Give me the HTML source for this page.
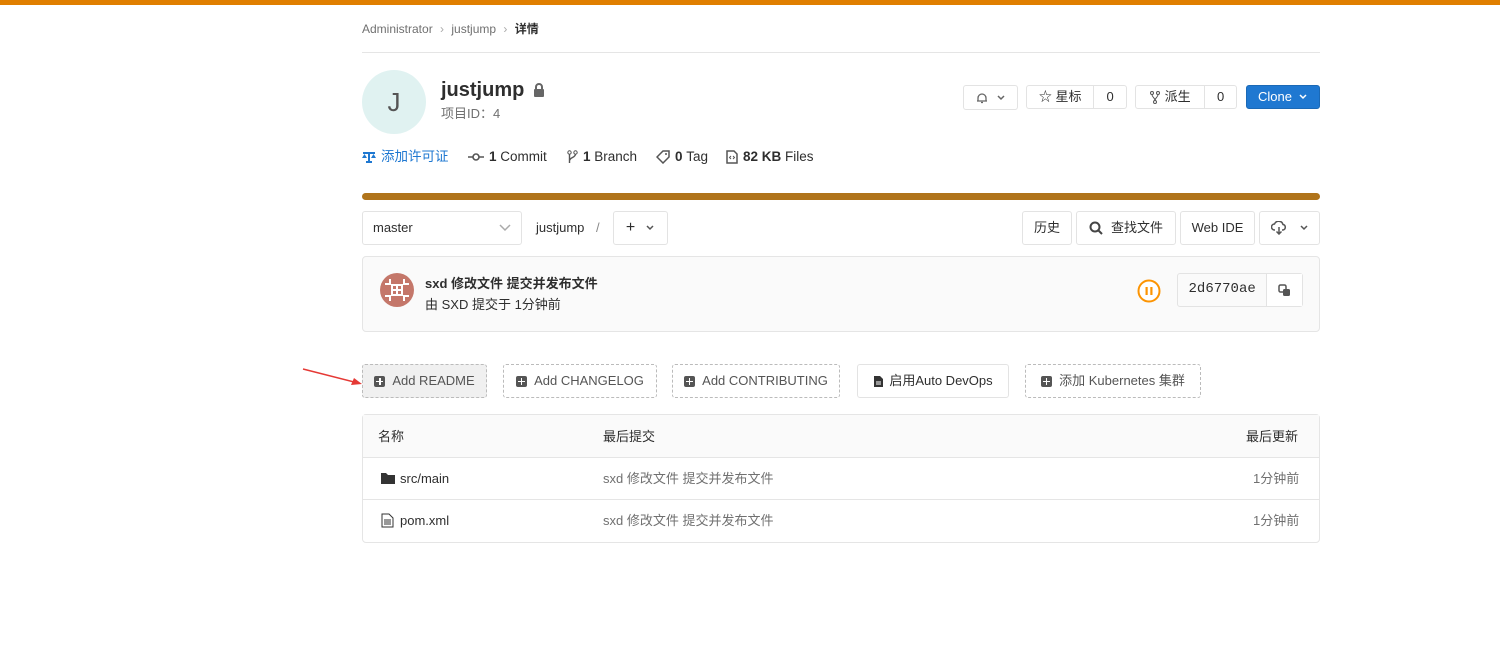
<!DOCTYPE html>
<html><head><meta charset="utf-8"><style>
*{box-sizing:border-box;margin:0;padding:0}
body{width:1500px;height:650px;background:#fff;font-family:"Liberation Sans","Noto Sans CJK SC",sans-serif;color:#2e2e2e;position:relative;overflow:hidden;font-size:13px;line-height:1.25}
.a{position:absolute}
.btn{position:absolute;border:1px solid #e3e3e3;border-radius:3px;background:#fff;display:flex;align-items:center;justify-content:center;font-size:13px;color:#2e2e2e}
.dash{position:absolute;border:1px dashed #bbb;border-radius:3px;display:flex;align-items:center;justify-content:center;font-size:13px;color:#555}
.pl{display:inline-block;width:11px;height:11px;background:#555;border-radius:2px;margin-right:7px;position:relative}
.pl:before{content:"";position:absolute;left:2px;top:5px;width:7px;height:1.5px;background:#fff}
.pl:after{content:"";position:absolute;left:4.8px;top:2px;width:1.5px;height:7px;background:#fff}
.row{position:absolute;left:362px;width:958px;border-top:1px solid #e5e5e5}
.st{position:absolute;top:149px;font-size:13.5px;white-space:nowrap;display:flex;align-items:center;height:16px}
.st svg{margin-right:5px}
</style></head><body>
<div class="a" style="left:0;top:0;width:1500px;height:5px;background:#e07f00"></div>
<div class="a" style="left:362px;top:22px;font-size:12px;color:#707070">Administrator <span style="color:#aaa;margin:0 4px">›</span> justjump <span style="color:#aaa;margin:0 4px">›</span> <b style="color:#2e2e2e;font-weight:bold">详情</b></div>
<div class="a" style="left:362px;top:52px;width:958px;height:1px;background:#e5e5e5"></div>
<div class="a" style="left:362px;top:70px;width:64px;height:64px;border-radius:50%;background:#e0f2f1;text-align:center;line-height:64px;font-size:26px;color:#555">J</div>
<div class="a" style="left:441px;top:78px;font-size:20px;font-weight:bold">justjump</div>
<svg class="a" style="left:533px;top:83px" width="12" height="14" viewBox="0 0 12 14"><rect x="1" y="6" width="10" height="8" rx="1" fill="#666"/><path d="M3 6V4a3 3 0 0 1 6 0v2" stroke="#666" stroke-width="2" fill="none"/></svg>
<div class="a" style="left:441px;top:106px;font-size:13px;color:#707070">项目ID：4</div>
<div class="st" style="left:362px;color:#1f78d1"><svg width="14" height="12" viewBox="0 0 14 12"><path d="M1 2h12M7 2v9M4 11h6" stroke="#1f78d1" stroke-width="2"/><path d="M0 7l2.5-4L5 7z M9 7l2.5-4L14 7z" fill="#1f78d1"/></svg>添加许可证</div>
<div class="st" style="left:468px"><svg width="16" height="10" viewBox="0 0 16 10"><circle cx="8" cy="5" r="3" stroke="#555" stroke-width="1.6" fill="none"/><path d="M0 5h5M11 5h5" stroke="#555" stroke-width="1.6"/></svg><b>1</b>&nbsp;Commit</div>
<div class="st" style="left:567px"><svg width="11" height="14" viewBox="0 0 11 14"><circle cx="2.5" cy="2.5" r="1.7" stroke="#555" fill="none"/><circle cx="8.5" cy="2.5" r="1.7" stroke="#555" fill="none"/><path d="M2.5 4v9M8.5 4c0 4-6 3-6 7" stroke="#555" stroke-width="1.4" fill="none"/></svg><b>1</b>&nbsp;Branch</div>
<div class="st" style="left:656px"><svg width="14" height="14" viewBox="0 0 14 14"><path d="M7 1h6v6l-6 6-6-6z" stroke="#555" stroke-width="1.5" fill="none"/><circle cx="10" cy="4" r="1" fill="#555"/></svg><b>0</b>&nbsp;Tag</div>
<div class="st" style="left:726px"><svg width="12" height="14" viewBox="0 0 12 14"><path d="M1 1h7l3 3v9H1z" stroke="#555" stroke-width="1.5" fill="none"/><path d="M5 6l-1.5 1.5L5 9M7 6l1.5 1.5L7 9" stroke="#555" fill="none"/></svg><b>82 KB</b>&nbsp;Files</div>
<div class="btn" style="left:963px;top:85px;width:55px;height:25px;color:#666"><svg width="12" height="12" viewBox="0 0 12 12"><path d="M2 9V6a4 4 0 0 1 8 0v3h1H1zM5 10.5h2" stroke="#666" stroke-width="1.3" fill="none"/></svg><svg width="10" height="8" style="margin-left:8px"><path d="M2 2l3 3 3-3" stroke="#666" stroke-width="1.5" fill="none"/></svg></div>
<div class="btn" style="left:1026px;top:85px;width:101px;height:24px;justify-content:flex-start"><span style="width:67px;text-align:center">☆ 星标</span><span style="border-left:1px solid #e3e3e3;width:33px;text-align:center;line-height:22px">0</span></div>
<div class="btn" style="left:1135px;top:85px;width:102px;height:24px;justify-content:flex-start"><span style="width:69px;text-align:center;display:flex;align-items:center;justify-content:center"><svg width="10" height="13" viewBox="0 0 10 13" style="margin-right:5px"><circle cx="2" cy="2" r="1.5" stroke="#555" fill="none"/><circle cx="8" cy="2" r="1.5" stroke="#555" fill="none"/><circle cx="5" cy="11" r="1.5" stroke="#555" fill="none"/><path d="M2 3.5c0 3 3 3 3 6M8 3.5c0 3-3 3-3 6" stroke="#555" fill="none"/></svg>派生</span><span style="border-left:1px solid #e3e3e3;width:32px;text-align:center;line-height:22px">0</span></div>
<div class="btn" style="left:1246px;top:85px;width:74px;height:24px;background:#1f78d1;border-color:#1b69b6;color:#fff">Clone<svg width="10" height="8" style="margin-left:6px"><path d="M2 2l3 3 3-3" stroke="#fff" stroke-width="1.5" fill="none"/></svg></div>
<div class="a" style="left:362px;top:193px;width:958px;height:7px;border-radius:4px;background:#b0741b"></div>
<div class="btn" style="left:362px;top:211px;width:160px;height:34px;justify-content:space-between;padding:0 10px"><span>master</span><svg width="12" height="8"><path d="M1 1l5 5 5-5" stroke="#aaa" stroke-width="1.5" fill="none"/></svg></div>
<div class="a" style="left:536px;top:220px;font-size:13px">justjump <span style="color:#888;margin-left:8px">/</span></div>
<div class="btn" style="left:613px;top:211px;width:55px;height:34px;font-size:16px">+<svg width="10" height="8" style="margin-left:10px"><path d="M2 2l3 3 3-3" stroke="#555" stroke-width="1.5" fill="none"/></svg></div>
<div class="btn" style="left:1022px;top:211px;width:50px;height:34px">历史</div>
<div class="btn" style="left:1076px;top:211px;width:100px;height:34px"><svg width="14" height="14" viewBox="0 0 14 14" style="margin-right:8px"><circle cx="6" cy="6" r="4.5" stroke="#444" stroke-width="2" fill="none"/><path d="M9.5 9.5L13 13" stroke="#444" stroke-width="2"/></svg>查找文件</div>
<div class="btn" style="left:1180px;top:211px;width:75px;height:34px">Web IDE</div>
<div class="btn" style="left:1259px;top:211px;width:61px;height:34px;color:#555"><svg width="16" height="14" viewBox="0 0 16 14"><path d="M4 9H3.5a3 3 0 0 1 0-6 4.5 4.5 0 0 1 8.5 0.5A2.8 2.8 0 0 1 12 9h-1" stroke="#555" stroke-width="1.5" fill="none"/><path d="M8 6v7M5.5 10.5L8 13l2.5-2.5" stroke="#555" stroke-width="1.5" fill="none"/></svg><svg width="10" height="8" style="margin-left:12px"><path d="M2 2l3 3 3-3" stroke="#555" stroke-width="1.5" fill="none"/></svg></div>
<div class="a" style="left:362px;top:256px;width:958px;height:76px;background:#fafafa;border:1px solid #e5e5e5;border-radius:4px"></div>
<svg class="a" style="left:380px;top:273px" width="34" height="34" viewBox="0 0 34 34"><circle cx="17" cy="17" r="17" fill="#c4776a"/><rect x="11" y="11" width="12" height="12" fill="#fff"/><rect x="13" y="13" width="3" height="3" fill="#c4776a"/><rect x="18" y="13" width="3" height="3" fill="#c4776a"/><rect x="13" y="18" width="3" height="3" fill="#c4776a"/><rect x="18" y="18" width="3" height="3" fill="#c4776a"/><path d="M5 11h5v-5M29 11h-5v-5M5 23h5v5M29 23h-5v5" stroke="#fff" stroke-width="2" fill="none"/></svg>
<div class="a" style="left:425px;top:276px;font-size:13px;font-weight:bold">sxd 修改文件 提交并发布文件</div>
<div class="a" style="left:425px;top:297px;font-size:13px">由 SXD 提交于 1分钟前</div>
<svg class="a" style="left:1137px;top:279px" width="24" height="24" viewBox="0 0 24 24"><circle cx="12" cy="12" r="10.5" stroke="#fc9403" stroke-width="2" fill="#fff"/><rect x="8.5" y="8" width="2.2" height="8" fill="#fc9403"/><rect x="13.3" y="8" width="2.2" height="8" fill="#fc9403"/></svg>
<div class="btn" style="left:1177px;top:273px;width:126px;height:34px;justify-content:flex-start;background:#fafafa"><span style="width:89px;text-align:center;font-family:'Liberation Mono',monospace;font-size:14px">2d6770ae</span><span style="border-left:1px solid #e3e3e3;width:36px;height:32px;display:flex;align-items:center;justify-content:center;background:#fff"><svg width="13" height="13" viewBox="0 0 13 13"><rect x="1" y="1" width="7" height="7" rx="1.5" stroke="#555" stroke-width="1.5" fill="none"/><rect x="5" y="5" width="7" height="7" rx="1.5" fill="#555"/></svg></span></div>
<svg class="a" style="left:300px;top:365px" width="66" height="22"><path d="M3 4L58 18" stroke="#e53935" stroke-width="1.5"/><path d="M62 19L51 20L54 13Z" fill="#e53935"/></svg>
<div class="dash" style="left:362px;top:364px;width:125px;height:34px;background:#f0f0f0"><span class="pl"></span>Add README</div>
<div class="dash" style="left:503px;top:364px;width:154px;height:34px"><span class="pl"></span>Add CHANGELOG</div>
<div class="dash" style="left:672px;top:364px;width:168px;height:34px"><span class="pl"></span>Add CONTRIBUTING</div>
<div class="btn" style="left:857px;top:364px;width:152px;height:34px"><svg width="11" height="13" viewBox="0 0 11 13" style="margin-right:5px"><path d="M1 1h6l3 3v8H1z" fill="#333"/><path d="M3 7h5M3 9h5" stroke="#fff"/></svg>启用Auto DevOps</div>
<div class="dash" style="left:1025px;top:364px;width:176px;height:34px"><span class="pl"></span>添加 Kubernetes 集群</div>
<div class="a" style="left:362px;top:414px;width:958px;height:129px;border:1px solid #e5e5e5;border-radius:4px"></div>
<div class="a" style="left:363px;top:415px;width:956px;height:42px;background:#fafafa"></div>
<div class="a" style="left:378px;top:429px">名称</div>
<div class="a" style="left:603px;top:429px">最后提交</div>
<div class="a" style="left:1246px;top:429px">最后更新</div>
<div class="row" style="top:457px"></div>
<div class="row" style="top:499px"></div>
<svg class="a" style="left:381px;top:472px" width="14" height="12"><path d="M0 1h5l2 2h7v9H0z" fill="#333"/></svg>
<div class="a" style="left:400px;top:471px">src/main</div>
<div class="a" style="left:603px;top:471px;color:#707070">sxd 修改文件 提交并发布文件</div>
<div class="a" style="left:1253px;top:471px;color:#707070">1分钟前</div>
<svg class="a" style="left:381px;top:513px" width="13" height="15"><path d="M1 1h7l4 4v9H1z" stroke="#333" fill="none"/><path d="M3 7h7M3 9h7M3 11h7" stroke="#333"/></svg>
<div class="a" style="left:400px;top:513px">pom.xml</div>
<div class="a" style="left:603px;top:513px;color:#707070">sxd 修改文件 提交并发布文件</div>
<div class="a" style="left:1253px;top:513px;color:#707070">1分钟前</div>
</body></html>
